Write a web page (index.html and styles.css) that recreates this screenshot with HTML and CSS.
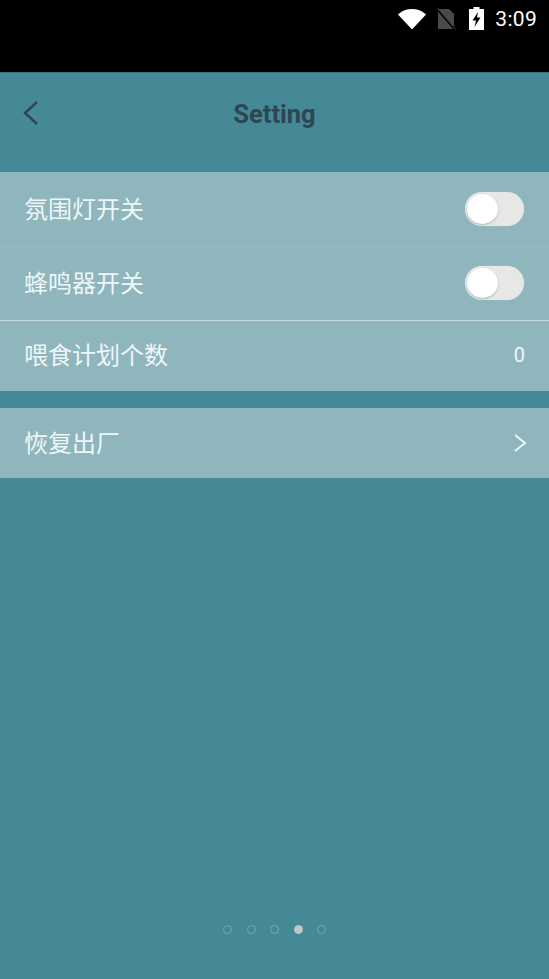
FILE: index.html
```html
<!DOCTYPE html>
<html lang="zh">
<head>
<meta charset="utf-8">
<title>Setting</title>
<link rel="stylesheet" href="styles.css">
</head>
<body>
<div class="status">
  <svg class="ic-wifi" viewBox="0 0 28 22"><path d="M0 6.500C4 2.700 8.800 1 14 1s10 1.700 14 5.500L14 21.500z" fill="#fff"/></svg>
  <svg class="ic-sim" viewBox="0 0 20 22"><path d="M2 1h11l5 5v15H2z" fill="#4a4a4a"/><path d="M0 0L19 22" stroke="#000" stroke-width="1.500"/><path d="M1.500 0L20 21.500" stroke="#3a3a3a" stroke-width="1"/></svg>
  <svg class="ic-batt" viewBox="0 0 15 23"><path d="M4.500 0h6v2H15v21H0V2h4.500z" fill="#fff"/><path d="M9 5L3.500 13.500H7L5.500 20 11.500 10.500H8z" fill="#000"/></svg>
  <span class="time">3:09</span>
</div>
<div class="screen">
  <header class="top">
    <svg class="back" viewBox="0 0 18 26"><path d="M15 2L3 13l12 11" fill="none" stroke="#2e4552" stroke-width="2.400"/></svg>
    <h1 class="title">Setting</h1>
  </header>
  <section class="group">
    <div class="row line-faint"><span class="label">氛围灯开关</span><span class="switch"><span class="knob"></span></span></div>
    <div class="row line-bright"><span class="label">蜂鸣器开关</span><span class="switch"><span class="knob"></span></span></div>
    <div class="row row-plain row-count"><span class="label">喂食计划个数</span><span class="num">0</span></div>
  </section>
  <section class="group second">
    <div class="row row-plain row-link"><span class="label">恢复出厂</span>
      <svg class="chev" viewBox="0 0 14 20"><path d="M2 2l10 8-10 8" fill="none" stroke="#eaf6f8" stroke-width="2"/></svg>
    </div>
  </section>
  <div class="dots"><i></i><i></i><i></i><i class="on"></i><i></i></div>
</div>
</body>
</html>
```
FILE: styles.css
```css
* { box-sizing: border-box; }
html, body { margin: 0; height: 100%; }
body { width: 549px; height: 979px; overflow: hidden; background: #458997; font-family: "Noto Sans CJK SC", "Noto Sans", sans-serif; display: flex; flex-direction: column; }
.status { height: 72px; background: #000; display: flex; align-items: flex-start; justify-content: flex-end; padding: 6px 12px 0 0; flex: none; }
.ic-wifi { width: 28px; height: 22px; margin: 2px 10px 0 0; }
.ic-sim { width: 20px; height: 22px; margin: 2px 13px 0 0; }
.ic-batt { width: 15px; height: 23px; margin: 1px 11px 0 0; }
.time { color: #fff; font: 21px/26px Roboto, sans-serif; letter-spacing: 0.300px; }
.screen { flex: 1; display: flex; flex-direction: column; min-height: 0; }
.top { height: 100px; display: flex; align-items: center; justify-content: center; position: relative; padding-bottom: 18px; border-top: 1px solid #3a7280; }
.back { position: absolute; left: 22px; top: 27px; width: 18px; height: 26px; }
.title { margin: 0; font: 700 25.500px/30px Roboto, sans-serif; color: #2e4552; }
.group { background: #8fb5bd; color: #eef7f8; font-size: 24px; line-height: 30px; }
.second { margin-top: 17px; }
.row { display: flex; align-items: center; justify-content: space-between; padding: 0 25px 0 24px; }
.label { margin-top: -2px; }
.row-plain { height: 70px; }
.row-count { padding-right: 24px; padding-bottom: 2px; }
.row-link { padding-right: 22px; }
.line-faint { border-bottom: 1px solid #98bcc4; height: 75px; }
.line-bright { border-bottom: 1px solid #c4dbdf; height: 74px; padding-bottom: 1px; }
.switch { width: 59px; height: 34px; border-radius: 17px; background: #e7e7e5; padding: 2px; box-shadow: 0 0 1px #c8dfe2; display: flex; }
.knob { width: 31px; height: 30px; border-radius: 50%; background: #fff; box-shadow: 0 1px 2px rgba(90,120,125,.45); }
.num { font: 20px/24px Roboto, sans-serif; color: #eef7f8; }
.chev { width: 14px; height: 20px; }
.dots { margin-top: auto; margin-bottom: 45px; display: flex; justify-content: center; gap: 14.500px; }
.dots i { width: 9px; height: 9px; border-radius: 50%; border: 1.500px solid #7ea8b2; }
.dots i.on { background: #c4c6c4; border-color: #c4cbc9; }
```
